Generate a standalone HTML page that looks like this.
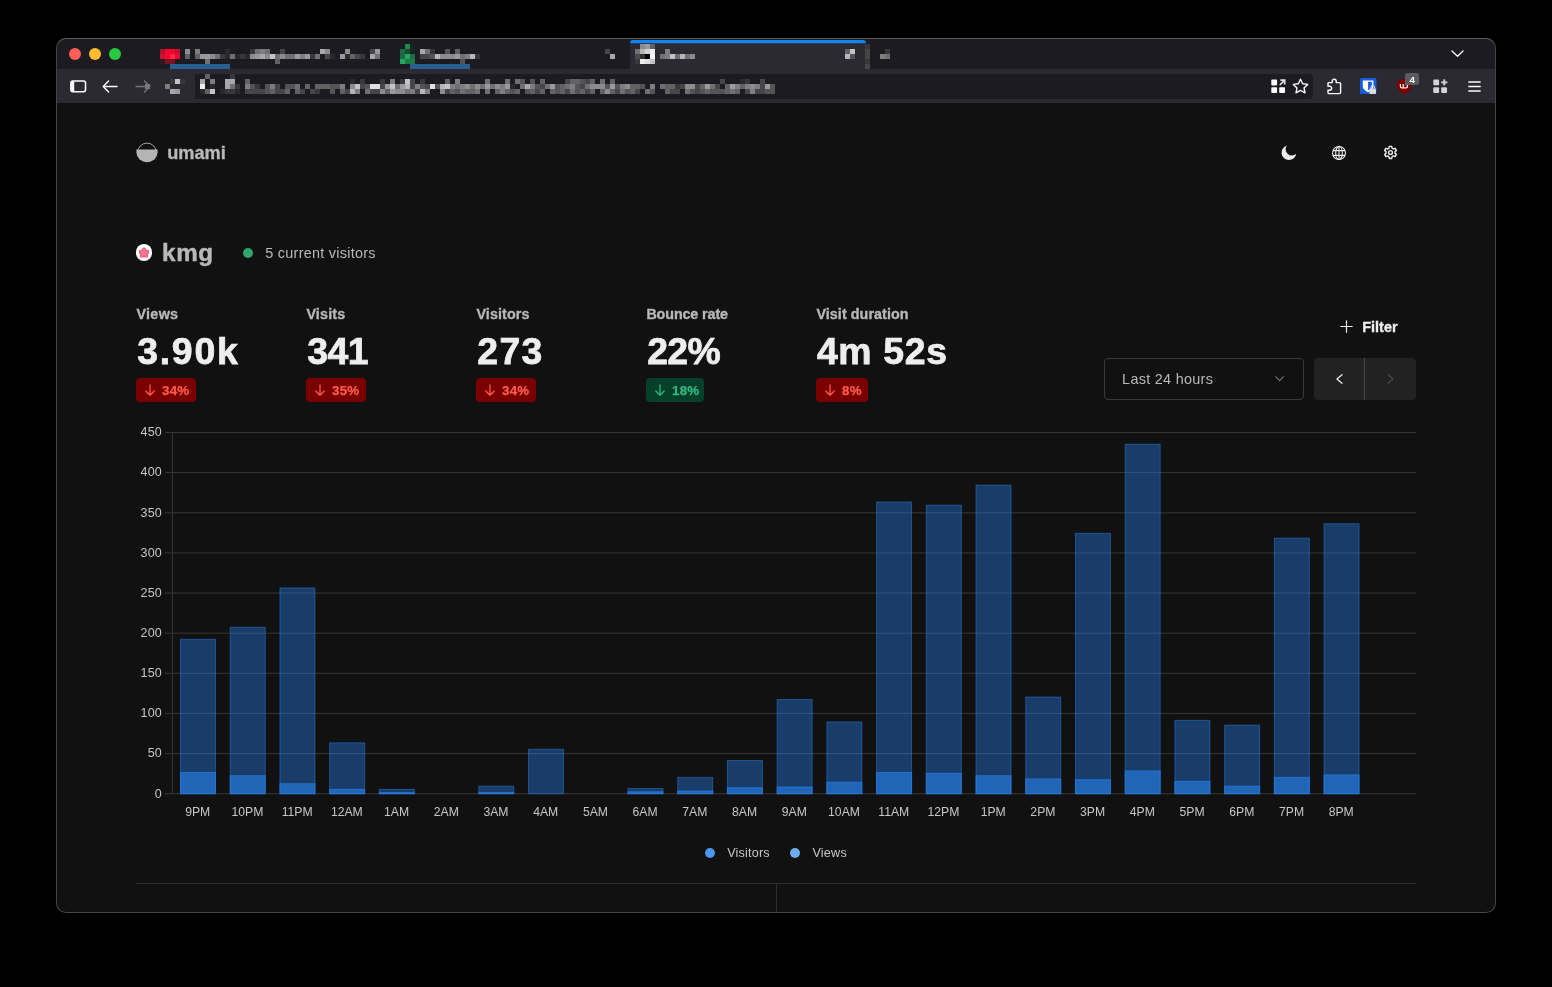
<!DOCTYPE html>
<html lang="en"><head><meta charset="utf-8"><title>umami</title>
<style>
html,body{margin:0;padding:0;background:#000;}
body{width:1552px;height:987px;position:relative;overflow:hidden;font-family:"Liberation Sans",sans-serif;}
.abs{position:absolute;}
.t{position:absolute;white-space:nowrap;line-height:1;font-family:"Liberation Sans",sans-serif;}
#win{position:absolute;left:56px;top:38px;width:1440px;height:875px;border-radius:10px;overflow:hidden;background:#111111;}
#winborder{position:absolute;left:56px;top:38px;width:1440px;height:875px;border-radius:10px;box-sizing:border-box;border:1px solid #454545;border-top-color:#5b5b5b;pointer-events:none;}
#tabbar{position:absolute;left:0;top:0;width:1440px;height:31px;background:#1c1b22;}
#toolbar{position:absolute;left:0;top:31px;width:1440px;height:34px;background:#2b2a33;}
svg{position:absolute;overflow:visible;}
.badge{position:absolute;height:24px;border-radius:4px;}
.s2{-webkit-text-stroke:0.25px currentColor;}
.s3{-webkit-text-stroke:0.35px currentColor;}
.s5{-webkit-text-stroke:0.5px currentColor;}
.s7{-webkit-text-stroke:0.75px currentColor;}
</style></head><body>
<div id="win">
<div id="tabbar"></div><div id="toolbar"></div>
</div>
<div id="page" class="abs" style="left:0;top:0;width:1552px;height:987px;will-change:transform;">
<div class="abs" style="left:69px;top:48px;width:12px;height:12px;border-radius:50%;background:#ff5f57;"></div>
<div class="abs" style="left:89px;top:48px;width:12px;height:12px;border-radius:50%;background:#febc2e;"></div>
<div class="abs" style="left:109px;top:48px;width:12px;height:12px;border-radius:50%;background:#28c840;"></div>
<div class="abs" style="left:630px;top:40px;width:236px;height:29px;background:#2b2a33;border-radius:4px 4px 0 0;"></div>
<div class="abs" style="left:630px;top:39.5px;width:236px;height:3.6px;background:#1484ee;border-radius:4px 4px 0 0;"></div>
<div class="abs" style="left:631px;top:43px;width:234px;height:1.2px;background:#1f3d6b;"></div>
<div class="abs" style="left:195px;top:73.6px;width:1117.5px;height:25.4px;background:#1c1b22;border-radius:0 4px 4px 0;"></div>
<svg width="1552" height="987" viewBox="0 0 1552 987" style="left:0;top:0;" shape-rendering="crispEdges">
<rect x="160" y="49" width="5" height="5" fill="#b0122a"/>
<rect x="165" y="49" width="5" height="5" fill="#ff0033"/>
<rect x="170" y="49" width="5" height="5" fill="#ff0033"/>
<rect x="175" y="49" width="5" height="5" fill="#c8102e"/>
<rect x="160" y="54" width="5" height="5" fill="#d01030"/>
<rect x="165" y="54" width="5" height="5" fill="#ff0033"/>
<rect x="170" y="54" width="5" height="5" fill="#ff2a4a"/>
<rect x="175" y="54" width="5" height="5" fill="#f00530"/>
<rect x="160" y="59" width="5" height="5" fill="#2a1a22"/>
<rect x="165" y="59" width="5" height="5" fill="#7a1020"/>
<rect x="170" y="59" width="5" height="5" fill="#7a1020"/>
<rect x="185" y="49" width="5" height="5" fill="#8c8c8f"/>
<rect x="195" y="49" width="5" height="5" fill="#7e7e81"/>
<rect x="225" y="49" width="5" height="5" fill="#2a2a2d"/>
<rect x="250" y="49" width="5" height="5" fill="#38383b"/>
<rect x="255" y="49" width="5" height="5" fill="#707073"/>
<rect x="260" y="49" width="5" height="5" fill="#7e7e81"/>
<rect x="265" y="49" width="5" height="5" fill="#707073"/>
<rect x="280" y="49" width="5" height="5" fill="#464649"/>
<rect x="320" y="49" width="5" height="5" fill="#a8a8ab"/>
<rect x="325" y="49" width="5" height="5" fill="#8c8c8f"/>
<rect x="185" y="54" width="5" height="5" fill="#626265"/>
<rect x="195" y="54" width="5" height="5" fill="#626265"/>
<rect x="200" y="54" width="5" height="5" fill="#9a9a9d"/>
<rect x="205" y="54" width="5" height="5" fill="#9a9a9d"/>
<rect x="210" y="54" width="5" height="5" fill="#8c8c8f"/>
<rect x="215" y="54" width="5" height="5" fill="#707073"/>
<rect x="220" y="54" width="5" height="5" fill="#38383b"/>
<rect x="225" y="54" width="5" height="5" fill="#2a2a2d"/>
<rect x="230" y="54" width="5" height="5" fill="#707073"/>
<rect x="235" y="54" width="5" height="5" fill="#2a2a2d"/>
<rect x="240" y="54" width="5" height="5" fill="#38383b"/>
<rect x="245" y="54" width="5" height="5" fill="#2a2a2d"/>
<rect x="250" y="54" width="5" height="5" fill="#8c8c8f"/>
<rect x="255" y="54" width="5" height="5" fill="#9a9a9d"/>
<rect x="260" y="54" width="5" height="5" fill="#a8a8ab"/>
<rect x="265" y="54" width="5" height="5" fill="#8c8c8f"/>
<rect x="270" y="54" width="5" height="5" fill="#c4c4c7"/>
<rect x="275" y="54" width="5" height="5" fill="#707073"/>
<rect x="280" y="54" width="5" height="5" fill="#8c8c8f"/>
<rect x="285" y="54" width="5" height="5" fill="#707073"/>
<rect x="290" y="54" width="5" height="5" fill="#707073"/>
<rect x="295" y="54" width="5" height="5" fill="#9a9a9d"/>
<rect x="300" y="54" width="5" height="5" fill="#7e7e81"/>
<rect x="305" y="54" width="5" height="5" fill="#9a9a9d"/>
<rect x="310" y="54" width="5" height="5" fill="#38383b"/>
<rect x="315" y="54" width="5" height="5" fill="#707073"/>
<rect x="325" y="54" width="5" height="5" fill="#464649"/>
<rect x="330" y="54" width="5" height="5" fill="#2a2a2d"/>
<rect x="340" y="54" width="5" height="5" fill="#9a9a9d"/>
<rect x="345" y="54" width="5" height="5" fill="#626265"/>
<rect x="205" y="59" width="5" height="5" fill="#707073"/>
<rect x="275" y="59" width="5" height="5" fill="#626265"/>
<rect x="170" y="64" width="60" height="5" fill="#27608f"/>
<rect x="345" y="49" width="5" height="5" fill="#8c8c8f"/>
<rect x="370" y="49" width="5" height="5" fill="#464649"/>
<rect x="375" y="49" width="5" height="5" fill="#9a9a9d"/>
<rect x="345" y="54" width="5" height="5" fill="#2a2a2d"/>
<rect x="350" y="54" width="5" height="5" fill="#626265"/>
<rect x="355" y="54" width="5" height="5" fill="#464649"/>
<rect x="360" y="54" width="5" height="5" fill="#38383b"/>
<rect x="370" y="54" width="5" height="5" fill="#a8a8ab"/>
<rect x="375" y="54" width="5" height="5" fill="#707073"/>
<rect x="405" y="44" width="5" height="5" fill="#1f8a4c"/>
<rect x="410" y="44" width="5" height="5" fill="#1a2428"/>
<rect x="400" y="49" width="5" height="5" fill="#1d6b40"/>
<rect x="405" y="49" width="5" height="5" fill="#1a4a30"/>
<rect x="410" y="49" width="5" height="5" fill="#1a2226"/>
<rect x="400" y="54" width="5" height="5" fill="#1d6b40"/>
<rect x="405" y="54" width="5" height="5" fill="#22a860"/>
<rect x="410" y="54" width="5" height="5" fill="#1d6b40"/>
<rect x="400" y="59" width="5" height="5" fill="#22a860"/>
<rect x="405" y="59" width="5" height="5" fill="#1f7a46"/>
<rect x="410" y="59" width="5" height="5" fill="#1f7a46"/>
<rect x="420" y="49" width="5" height="5" fill="#a8a8ab"/>
<rect x="425" y="49" width="5" height="5" fill="#707073"/>
<rect x="430" y="49" width="5" height="5" fill="#38383b"/>
<rect x="445" y="49" width="5" height="5" fill="#545457"/>
<rect x="455" y="49" width="5" height="5" fill="#626265"/>
<rect x="420" y="54" width="5" height="5" fill="#464649"/>
<rect x="425" y="54" width="5" height="5" fill="#464649"/>
<rect x="430" y="54" width="5" height="5" fill="#545457"/>
<rect x="435" y="54" width="5" height="5" fill="#b6b6b9"/>
<rect x="440" y="54" width="5" height="5" fill="#8c8c8f"/>
<rect x="445" y="54" width="5" height="5" fill="#8c8c8f"/>
<rect x="450" y="54" width="5" height="5" fill="#8c8c8f"/>
<rect x="455" y="54" width="5" height="5" fill="#9a9a9d"/>
<rect x="460" y="54" width="5" height="5" fill="#707073"/>
<rect x="465" y="54" width="5" height="5" fill="#7e7e81"/>
<rect x="470" y="54" width="5" height="5" fill="#b6b6b9"/>
<rect x="475" y="54" width="5" height="5" fill="#38383b"/>
<rect x="460" y="59" width="5" height="5" fill="#545457"/>
<rect x="410" y="64" width="60" height="5" fill="#27608f"/>
<rect x="605" y="49" width="5" height="5" fill="#464649"/>
<rect x="610" y="54" width="5" height="5" fill="#a8a8ab"/>
<rect x="640" y="44" width="5" height="5" fill="#8c8c8f"/>
<rect x="645" y="44" width="5" height="5" fill="#9a9a9d"/>
<rect x="650" y="44" width="5" height="5" fill="#626265"/>
<rect x="635" y="49" width="5" height="5" fill="#707073"/>
<rect x="640" y="49" width="5" height="5" fill="#b6b6b9"/>
<rect x="645" y="49" width="5" height="5" fill="#d2d2d5"/>
<rect x="650" y="49" width="5" height="5" fill="#eeeef1"/>
<rect x="635" y="54" width="5" height="5" fill="#4a4950"/>
<rect x="640" y="54" width="5" height="5" fill="#303030"/>
<rect x="645" y="54" width="5" height="5" fill="#000000"/>
<rect x="650" y="54" width="5" height="5" fill="#f8f8f8"/>
<rect x="635" y="59" width="5" height="5" fill="#38383b"/>
<rect x="640" y="59" width="5" height="5" fill="#eeeef1"/>
<rect x="645" y="59" width="5" height="5" fill="#e0e0e3"/>
<rect x="650" y="59" width="5" height="5" fill="#c4c4c7"/>
<rect x="665" y="49" width="5" height="5" fill="#7e7e81"/>
<rect x="660" y="54" width="5" height="5" fill="#707073"/>
<rect x="665" y="54" width="5" height="5" fill="#7e7e81"/>
<rect x="670" y="54" width="5" height="5" fill="#c4c4c7"/>
<rect x="675" y="54" width="5" height="5" fill="#707073"/>
<rect x="680" y="54" width="5" height="5" fill="#b6b6b9"/>
<rect x="685" y="54" width="5" height="5" fill="#707073"/>
<rect x="690" y="54" width="5" height="5" fill="#8c8c8f"/>
<rect x="845" y="49" width="5" height="5" fill="#626265"/>
<rect x="850" y="49" width="5" height="5" fill="#c4c4c7"/>
<rect x="845" y="54" width="5" height="5" fill="#b6b6b9"/>
<rect x="850" y="54" width="5" height="5" fill="#545457"/>
<rect x="865" y="44" width="5" height="5" fill="#38383b"/>
<rect x="865" y="49" width="5" height="5" fill="#464649"/>
<rect x="865" y="54" width="5" height="5" fill="#464649"/>
<rect x="865" y="59" width="5" height="5" fill="#38383b"/>
<rect x="865" y="64" width="5" height="5" fill="#464649"/>
<rect x="885" y="49" width="5" height="5" fill="#38383b"/>
<rect x="880" y="54" width="5" height="5" fill="#7e7e81"/>
<rect x="885" y="54" width="5" height="5" fill="#707073"/>
<rect x="165" y="79" width="5" height="5" fill="#2a2a2d"/>
<rect x="170" y="79" width="5" height="5" fill="#38383b"/>
<rect x="175" y="79" width="5" height="5" fill="#c4c4c7"/>
<rect x="180" y="79" width="5" height="5" fill="#38383b"/>
<rect x="165" y="84" width="5" height="5" fill="#7e7e81"/>
<rect x="170" y="89" width="5" height="5" fill="#a8a8ab"/>
<rect x="175" y="89" width="5" height="5" fill="#9a9a9d"/>
<rect x="205" y="74" width="5" height="5" fill="#626265"/>
<rect x="230" y="74" width="5" height="5" fill="#38383b"/>
<rect x="200" y="79" width="5" height="5" fill="#a8a8ab"/>
<rect x="210" y="79" width="5" height="5" fill="#7e7e81"/>
<rect x="225" y="79" width="5" height="5" fill="#a8a8ab"/>
<rect x="230" y="79" width="5" height="5" fill="#a8a8ab"/>
<rect x="200" y="84" width="5" height="5" fill="#eeeef1"/>
<rect x="210" y="84" width="5" height="5" fill="#2a2a2d"/>
<rect x="225" y="84" width="5" height="5" fill="#a8a8ab"/>
<rect x="230" y="84" width="5" height="5" fill="#707073"/>
<rect x="235" y="84" width="5" height="5" fill="#38383b"/>
<rect x="200" y="89" width="5" height="5" fill="#2a2a2d"/>
<rect x="205" y="89" width="5" height="5" fill="#626265"/>
<rect x="210" y="89" width="5" height="5" fill="#c4c4c7"/>
<rect x="220" y="89" width="5" height="5" fill="#2a2a2d"/>
<rect x="225" y="89" width="5" height="5" fill="#38383b"/>
<rect x="230" y="89" width="5" height="5" fill="#38383b"/>
<rect x="235" y="89" width="5" height="5" fill="#2a2a2d"/>
<rect x="245" y="79" width="5" height="5" fill="#626265"/>
<rect x="245" y="84" width="5" height="5" fill="#7e7e81"/>
<rect x="250" y="84" width="5" height="5" fill="#545457"/>
<rect x="255" y="84" width="5" height="5" fill="#38383b"/>
<rect x="265" y="84" width="5" height="5" fill="#545457"/>
<rect x="270" y="84" width="5" height="5" fill="#7e7e81"/>
<rect x="275" y="84" width="5" height="5" fill="#464649"/>
<rect x="285" y="84" width="5" height="5" fill="#545457"/>
<rect x="290" y="84" width="5" height="5" fill="#545457"/>
<rect x="295" y="84" width="5" height="5" fill="#707073"/>
<rect x="305" y="84" width="5" height="5" fill="#626265"/>
<rect x="315" y="84" width="5" height="5" fill="#626265"/>
<rect x="320" y="84" width="5" height="5" fill="#626265"/>
<rect x="325" y="84" width="5" height="5" fill="#626265"/>
<rect x="330" y="84" width="5" height="5" fill="#545457"/>
<rect x="335" y="84" width="5" height="5" fill="#545457"/>
<rect x="340" y="84" width="5" height="5" fill="#626265"/>
<rect x="245" y="89" width="5" height="5" fill="#464649"/>
<rect x="250" y="89" width="5" height="5" fill="#464649"/>
<rect x="255" y="89" width="5" height="5" fill="#464649"/>
<rect x="260" y="89" width="5" height="5" fill="#464649"/>
<rect x="265" y="89" width="5" height="5" fill="#545457"/>
<rect x="270" y="89" width="5" height="5" fill="#626265"/>
<rect x="275" y="89" width="5" height="5" fill="#464649"/>
<rect x="280" y="89" width="5" height="5" fill="#464649"/>
<rect x="285" y="89" width="5" height="5" fill="#626265"/>
<rect x="295" y="89" width="5" height="5" fill="#626265"/>
<rect x="300" y="89" width="5" height="5" fill="#464649"/>
<rect x="310" y="89" width="5" height="5" fill="#464649"/>
<rect x="315" y="89" width="5" height="5" fill="#38383b"/>
<rect x="330" y="89" width="5" height="5" fill="#545457"/>
<rect x="340" y="89" width="5" height="5" fill="#464649"/>
<rect x="345" y="89" width="5" height="5" fill="#464649"/>
<rect x="350" y="79" width="5" height="5" fill="#2a2a2d"/>
<rect x="360" y="79" width="5" height="5" fill="#38383b"/>
<rect x="380" y="79" width="5" height="5" fill="#38383b"/>
<rect x="390" y="79" width="5" height="5" fill="#7e7e81"/>
<rect x="400" y="79" width="5" height="5" fill="#38383b"/>
<rect x="405" y="79" width="5" height="5" fill="#c4c4c7"/>
<rect x="410" y="79" width="5" height="5" fill="#464649"/>
<rect x="420" y="79" width="5" height="5" fill="#38383b"/>
<rect x="445" y="79" width="5" height="5" fill="#626265"/>
<rect x="455" y="79" width="5" height="5" fill="#7e7e81"/>
<rect x="485" y="79" width="5" height="5" fill="#707073"/>
<rect x="505" y="79" width="5" height="5" fill="#707073"/>
<rect x="515" y="79" width="5" height="5" fill="#707073"/>
<rect x="520" y="79" width="5" height="5" fill="#545457"/>
<rect x="530" y="79" width="5" height="5" fill="#626265"/>
<rect x="340" y="84" width="5" height="5" fill="#7e7e81"/>
<rect x="350" y="84" width="5" height="5" fill="#8c8c8f"/>
<rect x="355" y="84" width="5" height="5" fill="#c4c4c7"/>
<rect x="360" y="84" width="5" height="5" fill="#464649"/>
<rect x="365" y="84" width="5" height="5" fill="#545457"/>
<rect x="370" y="84" width="5" height="5" fill="#e0e0e3"/>
<rect x="375" y="84" width="5" height="5" fill="#e0e0e3"/>
<rect x="380" y="84" width="5" height="5" fill="#464649"/>
<rect x="385" y="84" width="5" height="5" fill="#9a9a9d"/>
<rect x="390" y="84" width="5" height="5" fill="#c4c4c7"/>
<rect x="395" y="84" width="5" height="5" fill="#707073"/>
<rect x="400" y="84" width="5" height="5" fill="#9a9a9d"/>
<rect x="405" y="84" width="5" height="5" fill="#b6b6b9"/>
<rect x="410" y="84" width="5" height="5" fill="#464649"/>
<rect x="415" y="84" width="5" height="5" fill="#7e7e81"/>
<rect x="420" y="84" width="5" height="5" fill="#545457"/>
<rect x="425" y="84" width="5" height="5" fill="#464649"/>
<rect x="430" y="84" width="5" height="5" fill="#e0e0e3"/>
<rect x="435" y="84" width="5" height="5" fill="#545457"/>
<rect x="440" y="84" width="5" height="5" fill="#b6b6b9"/>
<rect x="445" y="84" width="5" height="5" fill="#c4c4c7"/>
<rect x="450" y="84" width="5" height="5" fill="#7e7e81"/>
<rect x="455" y="84" width="5" height="5" fill="#707073"/>
<rect x="460" y="84" width="5" height="5" fill="#7e7e81"/>
<rect x="465" y="84" width="5" height="5" fill="#8c8c8f"/>
<rect x="470" y="84" width="5" height="5" fill="#707073"/>
<rect x="475" y="84" width="5" height="5" fill="#8c8c8f"/>
<rect x="480" y="84" width="5" height="5" fill="#707073"/>
<rect x="485" y="84" width="5" height="5" fill="#9a9a9d"/>
<rect x="490" y="84" width="5" height="5" fill="#707073"/>
<rect x="495" y="84" width="5" height="5" fill="#8c8c8f"/>
<rect x="500" y="84" width="5" height="5" fill="#7e7e81"/>
<rect x="505" y="84" width="5" height="5" fill="#9a9a9d"/>
<rect x="510" y="84" width="5" height="5" fill="#2a2a2d"/>
<rect x="520" y="84" width="5" height="5" fill="#707073"/>
<rect x="525" y="84" width="5" height="5" fill="#a8a8ab"/>
<rect x="530" y="84" width="5" height="5" fill="#626265"/>
<rect x="535" y="84" width="5" height="5" fill="#8c8c8f"/>
<rect x="340" y="89" width="5" height="5" fill="#626265"/>
<rect x="350" y="89" width="5" height="5" fill="#b6b6b9"/>
<rect x="355" y="89" width="5" height="5" fill="#7e7e81"/>
<rect x="365" y="89" width="5" height="5" fill="#707073"/>
<rect x="370" y="89" width="5" height="5" fill="#464649"/>
<rect x="375" y="89" width="5" height="5" fill="#464649"/>
<rect x="380" y="89" width="5" height="5" fill="#8c8c8f"/>
<rect x="385" y="89" width="5" height="5" fill="#626265"/>
<rect x="390" y="89" width="5" height="5" fill="#9a9a9d"/>
<rect x="395" y="89" width="5" height="5" fill="#8c8c8f"/>
<rect x="400" y="89" width="5" height="5" fill="#8c8c8f"/>
<rect x="405" y="89" width="5" height="5" fill="#707073"/>
<rect x="410" y="89" width="5" height="5" fill="#7e7e81"/>
<rect x="415" y="89" width="5" height="5" fill="#464649"/>
<rect x="420" y="89" width="5" height="5" fill="#b6b6b9"/>
<rect x="425" y="89" width="5" height="5" fill="#7e7e81"/>
<rect x="440" y="89" width="5" height="5" fill="#8c8c8f"/>
<rect x="445" y="89" width="5" height="5" fill="#464649"/>
<rect x="450" y="89" width="5" height="5" fill="#626265"/>
<rect x="455" y="89" width="5" height="5" fill="#545457"/>
<rect x="460" y="89" width="5" height="5" fill="#707073"/>
<rect x="465" y="89" width="5" height="5" fill="#626265"/>
<rect x="470" y="89" width="5" height="5" fill="#626265"/>
<rect x="475" y="89" width="5" height="5" fill="#707073"/>
<rect x="485" y="89" width="5" height="5" fill="#707073"/>
<rect x="495" y="89" width="5" height="5" fill="#626265"/>
<rect x="500" y="89" width="5" height="5" fill="#7e7e81"/>
<rect x="505" y="89" width="5" height="5" fill="#626265"/>
<rect x="510" y="89" width="5" height="5" fill="#545457"/>
<rect x="515" y="89" width="5" height="5" fill="#626265"/>
<rect x="525" y="89" width="5" height="5" fill="#545457"/>
<rect x="530" y="89" width="5" height="5" fill="#707073"/>
<rect x="535" y="89" width="5" height="5" fill="#545457"/>
<rect x="540" y="89" width="5" height="5" fill="#626265"/>
<rect x="530" y="79" width="5" height="5" fill="#545457"/>
<rect x="540" y="79" width="5" height="5" fill="#626265"/>
<rect x="565" y="79" width="5" height="5" fill="#464649"/>
<rect x="570" y="79" width="5" height="5" fill="#626265"/>
<rect x="575" y="79" width="5" height="5" fill="#626265"/>
<rect x="580" y="79" width="5" height="5" fill="#545457"/>
<rect x="585" y="79" width="5" height="5" fill="#464649"/>
<rect x="590" y="79" width="5" height="5" fill="#626265"/>
<rect x="600" y="79" width="5" height="5" fill="#707073"/>
<rect x="610" y="79" width="5" height="5" fill="#626265"/>
<rect x="720" y="79" width="5" height="5" fill="#464649"/>
<rect x="530" y="84" width="5" height="5" fill="#7e7e81"/>
<rect x="535" y="84" width="5" height="5" fill="#545457"/>
<rect x="540" y="84" width="5" height="5" fill="#464649"/>
<rect x="545" y="84" width="5" height="5" fill="#707073"/>
<rect x="550" y="84" width="5" height="5" fill="#9a9a9d"/>
<rect x="555" y="84" width="5" height="5" fill="#545457"/>
<rect x="560" y="84" width="5" height="5" fill="#626265"/>
<rect x="565" y="84" width="5" height="5" fill="#707073"/>
<rect x="570" y="84" width="5" height="5" fill="#7e7e81"/>
<rect x="575" y="84" width="5" height="5" fill="#545457"/>
<rect x="580" y="84" width="5" height="5" fill="#464649"/>
<rect x="585" y="84" width="5" height="5" fill="#707073"/>
<rect x="590" y="84" width="5" height="5" fill="#8c8c8f"/>
<rect x="595" y="84" width="5" height="5" fill="#8c8c8f"/>
<rect x="600" y="84" width="5" height="5" fill="#8c8c8f"/>
<rect x="605" y="84" width="5" height="5" fill="#545457"/>
<rect x="610" y="84" width="5" height="5" fill="#9a9a9d"/>
<rect x="615" y="84" width="5" height="5" fill="#545457"/>
<rect x="620" y="84" width="5" height="5" fill="#7e7e81"/>
<rect x="625" y="84" width="5" height="5" fill="#8c8c8f"/>
<rect x="630" y="84" width="5" height="5" fill="#626265"/>
<rect x="635" y="84" width="5" height="5" fill="#626265"/>
<rect x="640" y="84" width="5" height="5" fill="#545457"/>
<rect x="650" y="84" width="5" height="5" fill="#7e7e81"/>
<rect x="660" y="84" width="5" height="5" fill="#707073"/>
<rect x="665" y="84" width="5" height="5" fill="#626265"/>
<rect x="670" y="84" width="5" height="5" fill="#626265"/>
<rect x="675" y="84" width="5" height="5" fill="#38383b"/>
<rect x="680" y="84" width="5" height="5" fill="#464649"/>
<rect x="685" y="84" width="5" height="5" fill="#8c8c8f"/>
<rect x="690" y="84" width="5" height="5" fill="#8c8c8f"/>
<rect x="695" y="84" width="5" height="5" fill="#464649"/>
<rect x="700" y="84" width="5" height="5" fill="#626265"/>
<rect x="705" y="84" width="5" height="5" fill="#9a9a9d"/>
<rect x="710" y="84" width="5" height="5" fill="#707073"/>
<rect x="715" y="84" width="5" height="5" fill="#464649"/>
<rect x="725" y="84" width="5" height="5" fill="#7e7e81"/>
<rect x="530" y="89" width="5" height="5" fill="#626265"/>
<rect x="535" y="89" width="5" height="5" fill="#464649"/>
<rect x="540" y="89" width="5" height="5" fill="#626265"/>
<rect x="550" y="89" width="5" height="5" fill="#626265"/>
<rect x="555" y="89" width="5" height="5" fill="#545457"/>
<rect x="560" y="89" width="5" height="5" fill="#626265"/>
<rect x="565" y="89" width="5" height="5" fill="#464649"/>
<rect x="570" y="89" width="5" height="5" fill="#707073"/>
<rect x="575" y="89" width="5" height="5" fill="#545457"/>
<rect x="580" y="89" width="5" height="5" fill="#626265"/>
<rect x="585" y="89" width="5" height="5" fill="#464649"/>
<rect x="590" y="89" width="5" height="5" fill="#626265"/>
<rect x="600" y="89" width="5" height="5" fill="#626265"/>
<rect x="605" y="89" width="5" height="5" fill="#8c8c8f"/>
<rect x="610" y="89" width="5" height="5" fill="#626265"/>
<rect x="615" y="89" width="5" height="5" fill="#464649"/>
<rect x="620" y="89" width="5" height="5" fill="#707073"/>
<rect x="625" y="89" width="5" height="5" fill="#545457"/>
<rect x="630" y="89" width="5" height="5" fill="#626265"/>
<rect x="635" y="89" width="5" height="5" fill="#464649"/>
<rect x="645" y="89" width="5" height="5" fill="#707073"/>
<rect x="650" y="89" width="5" height="5" fill="#545457"/>
<rect x="665" y="89" width="5" height="5" fill="#626265"/>
<rect x="670" y="89" width="5" height="5" fill="#464649"/>
<rect x="675" y="89" width="5" height="5" fill="#464649"/>
<rect x="685" y="89" width="5" height="5" fill="#707073"/>
<rect x="690" y="89" width="5" height="5" fill="#545457"/>
<rect x="695" y="89" width="5" height="5" fill="#464649"/>
<rect x="700" y="89" width="5" height="5" fill="#545457"/>
<rect x="705" y="89" width="5" height="5" fill="#626265"/>
<rect x="710" y="89" width="5" height="5" fill="#545457"/>
<rect x="715" y="89" width="5" height="5" fill="#545457"/>
<rect x="720" y="89" width="5" height="5" fill="#545457"/>
<rect x="720" y="79" width="5" height="5" fill="#464649"/>
<rect x="740" y="79" width="5" height="5" fill="#2a2a2d"/>
<rect x="745" y="79" width="5" height="5" fill="#38383b"/>
<rect x="760" y="79" width="5" height="5" fill="#464649"/>
<rect x="725" y="84" width="5" height="5" fill="#626265"/>
<rect x="730" y="84" width="5" height="5" fill="#9a9a9d"/>
<rect x="735" y="84" width="5" height="5" fill="#7e7e81"/>
<rect x="740" y="84" width="5" height="5" fill="#626265"/>
<rect x="745" y="84" width="5" height="5" fill="#7e7e81"/>
<rect x="750" y="84" width="5" height="5" fill="#8c8c8f"/>
<rect x="755" y="84" width="5" height="5" fill="#7e7e81"/>
<rect x="760" y="84" width="5" height="5" fill="#464649"/>
<rect x="765" y="84" width="5" height="5" fill="#9a9a9d"/>
<rect x="770" y="84" width="5" height="5" fill="#545457"/>
<rect x="725" y="89" width="5" height="5" fill="#626265"/>
<rect x="730" y="89" width="5" height="5" fill="#707073"/>
<rect x="735" y="89" width="5" height="5" fill="#626265"/>
<rect x="745" y="89" width="5" height="5" fill="#464649"/>
<rect x="750" y="89" width="5" height="5" fill="#7e7e81"/>
<rect x="755" y="89" width="5" height="5" fill="#464649"/>
<rect x="760" y="89" width="5" height="5" fill="#464649"/>
<rect x="765" y="89" width="5" height="5" fill="#545457"/>
<rect x="770" y="89" width="5" height="5" fill="#545457"/>
</svg>
<svg width="16.4" height="12.6" viewBox="0 0 17 13" style="left:69.9px;top:79.7px;"><rect x="0.9" y="0.9" width="15.2" height="11.2" rx="2" fill="none" stroke="#fbfbfe" stroke-width="1.6"/><path d="M1 2.5 Q1 1 2.6 1 H4.4 V12 H2.6 Q1 12 1 10.5 Z" fill="#fbfbfe"/></svg>
<svg width="16" height="13" viewBox="0 0 16 13" style="left:102.4px;top:80px;" fill="none" stroke="#fbfbfe" stroke-width="1.35" stroke-linecap="round" stroke-linejoin="round"><path d="M15 6.5H1.4M6.6 1L1.2 6.5L6.6 12"/></svg>
<svg width="16" height="13" viewBox="0 0 16 13" style="left:134.6px;top:80px;" fill="none" stroke="#75747c" stroke-width="1.4" stroke-linecap="round" stroke-linejoin="round"><path d="M1 6.5H12M9.4 1L14.8 6.5L9.4 12"/></svg>
<div class="abs" style="left:145px;top:84px;width:5px;height:5px;background:#77767d;"></div>
<svg width="15" height="15" viewBox="0 0 15 15" style="left:1270.5px;top:78.8px;"><g fill="#fbfbfe"><rect x="0.3" y="0.6" width="5.8" height="5.8" rx="0.8"/><rect x="0.3" y="8.3" width="5.8" height="5.8" rx="0.8"/><rect x="8.2" y="8.3" width="5.8" height="5.8" rx="0.8"/></g><path d="M8.8 6L13 1.8M9.4 1.1H13.7V5.4" fill="none" stroke="#dcdce2" stroke-width="1.7"/></svg>
<svg width="17" height="16" viewBox="0 0 17 16" style="left:1291.6px;top:78.4px;" fill="none" stroke="#fbfbfe" stroke-width="1.4" stroke-linejoin="round"><path d="M8.5 1.2L10.7 5.8L15.7 6.4L12 9.9L13 14.8L8.5 12.4L4 14.8L5 9.9L1.3 6.4L6.3 5.8Z"/></svg>
<svg width="15" height="17" viewBox="0 0 15 17" style="left:1327px;top:77.6px;" fill="none" stroke="#fbfbfe" stroke-width="1.4" stroke-linejoin="round"><path d="M5.2 4.6V3.2A2 2 0 0 1 9.2 3.2V4.6H12.6Q13.6 4.6 13.6 5.6V14.6Q13.6 15.6 12.6 15.6H2Q1 15.6 1 14.6V12.2H2.6A2 2 0 0 0 2.6 8.2H1V5.6Q1 4.6 2 4.6Z"/></svg>
<svg width="17" height="17" viewBox="0 0 17 17" style="left:1359.8px;top:77.8px;"><rect x="0" y="0" width="16.4" height="16" rx="1.5" fill="#175ddc"/><path d="M2.8 2.4H13.4V8.2Q13.4 11.8 8.1 14.2Q2.8 11.8 2.8 8.2Z" fill="#ffffff"/><path d="M8.1 3.8H11.9V8.2Q11.9 10.6 8.1 12.5Z" fill="#175ddc"/><rect x="9.4" y="10.6" width="6.6" height="5.4" rx="1" fill="#d9d9de"/><path d="M10.9 10.8V9.6A1.8 1.8 0 0 1 14.5 9.6V10.8" fill="none" stroke="#d9d9de" stroke-width="1.1"/></svg>
<svg width="15" height="17" viewBox="0 0 15 17" style="left:1396.6px;top:78.2px;"><path d="M7.3 0.4Q10.6 2.4 14.2 2.6V8.2Q14.2 13 7.3 16.2Q0.4 13 0.4 8.2V2.6Q4 2.4 7.3 0.4Z" fill="#800000"/><path d="M3.4 6V8.6Q3.4 10 4.8 10H6.2V6M6.2 8.6Q6.2 10 7.6 10H9Q10.4 10 10.4 8.6V7.4Q10.4 6 9 6H8" fill="none" stroke="#ffffff" stroke-width="1.2"/></svg>
<div class="abs" style="left:1405px;top:73.3px;width:14px;height:11.8px;border-radius:2.5px;background:#5b5b5f;"></div>
<div class="t " style="top:74.80px;font-size:9.8px;color:#ffffff;font-weight:700;left:1409.40px;">4</div>
<svg width="15" height="15" viewBox="0 0 15 15" style="left:1432.6px;top:78.8px;"><g fill="#d4d4d8"><rect x="0.3" y="0.5" width="5.8" height="5.8" rx="1"/><rect x="0.3" y="8.2" width="5.8" height="5.8" rx="1"/><rect x="8.2" y="8.2" width="5.8" height="5.8" rx="1"/><rect x="10.3" y="0.4" width="1.9" height="6"/><rect x="8.2" y="2.45" width="6.1" height="1.9"/></g></svg>
<svg width="13" height="11" viewBox="0 0 13 11" style="left:1467.6px;top:80.6px;" stroke="#fbfbfe" stroke-width="1.4" stroke-linecap="round"><path d="M0.8 1H12.2M0.8 5.5H12.2M0.8 10H12.2"/></svg>
<svg width="13" height="7.4" viewBox="0 0 14 8" style="left:1451.4px;top:50.4px;" fill="none" stroke="#fbfbfe" stroke-width="1.4" stroke-linecap="round" stroke-linejoin="round"><path d="M1 1L7 6.8L13 1"/></svg>
<svg width="22" height="21" viewBox="0 0 22 21" style="left:135.5px;top:142.3px;">
<circle cx="11" cy="10.4" r="9.3" fill="none" stroke="#b4b4b4" stroke-width="0.9"/>
<path d="M0.4 7.6 H21.6 V10.2 A10.6 10 0 0 1 0.4 10.2 Z" fill="#b4b4b4"/>
</svg>
<div class="t s3" style="top:143.59px;font-size:18.2px;color:#b8b8b8;font-weight:700;letter-spacing:-0.05px;left:167.30px;">umami</div>
<svg width="16" height="16" viewBox="0 0 16 16" style="left:1281px;top:145px;">
<path d="M5.9 0.6 A7.4 7.4 0 1 0 15.25 8.75 A6.22 6.22 0 0 1 5.9 0.6 Z" fill="#eeeeee"/>
</svg>
<svg width="16" height="16" viewBox="0 0 16 16" style="left:1331.4px;top:144.8px;" fill="none" stroke="#eeeeee" stroke-width="1.1">
<circle cx="8" cy="8" r="6.5"/>
<ellipse cx="8" cy="8" rx="3.3" ry="6.5"/>
<path d="M8 1.5V14.5M2 5.6H14M2 10.4H14"/>
</svg>
<svg width="17" height="17" viewBox="0 0 24 24" style="left:1381.8px;top:144.0px;" fill="none" stroke="#eeeeee" stroke-width="2" stroke-linejoin="round">
<path d="M10.3 2.2h3.4l.6 2.7 1.7.9 2.6-.9 1.7 2.9-2 1.9v2l2 1.9-1.7 2.9-2.6-.9-1.7.9-.6 2.7h-3.4l-.6-2.7-1.7-.9-2.6.9-1.7-2.9 2-1.9v-2l-2-1.9 1.7-2.9 2.6.9 1.7-.9z" transform="translate(0 1.2)"/>
<circle cx="12" cy="12" r="2.7"/>
</svg>
<div class="abs" style="left:136px;top:244.3px;width:16.4px;height:16.4px;border-radius:50%;background:#fdfdfd;"></div>
<svg width="12" height="12" viewBox="0 0 12 12" style="left:138.2px;top:246.5px;">
<g fill="#ee5f80"><circle cx="6" cy="2.9" r="2.3"/><circle cx="3" cy="5" r="2.3"/><circle cx="9" cy="5" r="2.3"/><circle cx="4.1" cy="8.5" r="2.3"/><circle cx="7.9" cy="8.5" r="2.3"/><circle cx="6" cy="6" r="3"/></g>
<g fill="none" stroke="#f7a3b6" stroke-width="0.7"><circle cx="6" cy="6" r="1.6"/><path d="M6 1.6V4.2M2 4.8L4.4 5.6M10 4.8L7.6 5.6M3.6 9.6L5 7.4M8.4 9.6L7 7.4"/></g>
</svg>
<div class="t s5" style="top:241.01px;font-size:24.2px;color:#b8b8b8;font-weight:700;letter-spacing:0.6px;left:162.10px;">kmg</div>
<div class="abs" style="left:243px;top:247.5px;width:10px;height:10px;border-radius:50%;background:#30a46c;"></div>
<div class="t " style="top:245.81px;font-size:14.4px;color:#b8b8b8;font-weight:400;letter-spacing:0.27px;left:265.30px;">5 current visitors</div>
<div class="t lab0 s3" style="top:306.90px;font-size:14.3px;color:#b8b8b8;font-weight:700;letter-spacing:0.35px;left:136.40px;">Views</div>
<div class="t val0 s7" style="top:332.54px;font-size:37.4px;color:#eeeeee;font-weight:700;letter-spacing:1.75px;left:137.20px;">3.90k</div>
<div class="badge b0" style="left:136.2px;top:378px;width:60.2px;background:#7a0000;"><svg width="10" height="12" viewBox="0 0 10 12" style="left:8.7px;top:5.6px;" fill="none" stroke="#ff5b4d" stroke-width="1.25" stroke-linecap="round" stroke-linejoin="round"><path d="M5 0.8V11.2M0.8 7L5 11.2L9.2 7"/></svg><div class="t bt0 s2" style="left:25.8px;top:5.74px;font-size:13.3px;font-weight:700;letter-spacing:0.3px;color:#ff5b4d;">34%</div></div>
<div class="t lab1 s3" style="top:306.90px;font-size:14.3px;color:#b8b8b8;font-weight:700;letter-spacing:0.2px;left:306.40px;">Visits</div>
<div class="t val1 s7" style="top:332.54px;font-size:37.4px;color:#eeeeee;font-weight:700;letter-spacing:-0.5px;left:307.20px;">341</div>
<div class="badge b1" style="left:306.2px;top:378px;width:59.8px;background:#7a0000;"><svg width="10" height="12" viewBox="0 0 10 12" style="left:8.7px;top:5.6px;" fill="none" stroke="#ff5b4d" stroke-width="1.25" stroke-linecap="round" stroke-linejoin="round"><path d="M5 0.8V11.2M0.8 7L5 11.2L9.2 7"/></svg><div class="t bt1 s2" style="left:25.8px;top:5.74px;font-size:13.3px;font-weight:700;letter-spacing:0.3px;color:#ff5b4d;">35%</div></div>
<div class="t lab2 s3" style="top:306.90px;font-size:14.3px;color:#b8b8b8;font-weight:700;letter-spacing:0.12px;left:476.40px;">Visitors</div>
<div class="t val2 s7" style="top:332.54px;font-size:37.4px;color:#eeeeee;font-weight:700;letter-spacing:1.4px;left:477.20px;">273</div>
<div class="badge b2" style="left:476.2px;top:378px;width:60.2px;background:#7a0000;"><svg width="10" height="12" viewBox="0 0 10 12" style="left:8.7px;top:5.6px;" fill="none" stroke="#ff5b4d" stroke-width="1.25" stroke-linecap="round" stroke-linejoin="round"><path d="M5 0.8V11.2M0.8 7L5 11.2L9.2 7"/></svg><div class="t bt2 s2" style="left:25.8px;top:5.74px;font-size:13.3px;font-weight:700;letter-spacing:0.3px;color:#ff5b4d;">34%</div></div>
<div class="t lab3 s3" style="top:306.90px;font-size:14.3px;color:#b8b8b8;font-weight:700;letter-spacing:-0.1px;left:646.40px;">Bounce rate</div>
<div class="t val3 s7" style="top:332.54px;font-size:37.4px;color:#eeeeee;font-weight:700;letter-spacing:-0.7px;left:647.20px;">22%</div>
<div class="badge b3" style="left:646.2px;top:378px;width:57.8px;background:#06402b;"><svg width="10" height="12" viewBox="0 0 10 12" style="left:8.7px;top:5.6px;" fill="none" stroke="#2fb87f" stroke-width="1.25" stroke-linecap="round" stroke-linejoin="round"><path d="M5 0.8V11.2M0.8 7L5 11.2L9.2 7"/></svg><div class="t bt3 s2" style="left:25.8px;top:5.74px;font-size:13.3px;font-weight:700;letter-spacing:0.3px;color:#2fb87f;">18%</div></div>
<div class="t lab4 s3" style="top:306.90px;font-size:14.3px;color:#b8b8b8;font-weight:700;letter-spacing:0.08px;left:816.40px;">Visit duration</div>
<div class="t val4 s7" style="top:332.54px;font-size:37.4px;color:#eeeeee;font-weight:700;letter-spacing:0.65px;left:816.90px;">4m&nbsp;52s</div>
<div class="badge b4" style="left:816.2px;top:378px;width:51.6px;background:#7a0000;"><svg width="10" height="12" viewBox="0 0 10 12" style="left:8.7px;top:5.6px;" fill="none" stroke="#ff5b4d" stroke-width="1.25" stroke-linecap="round" stroke-linejoin="round"><path d="M5 0.8V11.2M0.8 7L5 11.2L9.2 7"/></svg><div class="t bt4 s2" style="left:25.8px;top:5.74px;font-size:13.3px;font-weight:700;letter-spacing:0.3px;color:#ff5b4d;">8%</div></div>
<svg width="13" height="13" viewBox="0 0 13 13" style="left:1339.8px;top:320.2px;" fill="none" stroke="#eeeeee" stroke-width="1.2" stroke-linecap="round"><path d="M6.5 0.8V12.2M0.8 6.5H12.2"/></svg>
<div class="t filter s3" style="top:320.01px;font-size:14.4px;color:#eeeeee;font-weight:700;left:1362.30px;">Filter</div>
<div class="abs" style="left:1104px;top:357.5px;width:200px;height:42px;box-sizing:border-box;border:1px solid #3a3a3a;border-radius:4px;"></div>
<div class="t last24" style="top:372.21px;font-size:14.4px;color:#b8b8b8;font-weight:400;letter-spacing:0.3px;left:1122.10px;">Last 24 hours</div>
<svg width="9.2" height="5.6" viewBox="0 0 10 6" style="left:1274.8px;top:376.1px;" fill="none" stroke="#7b7b7b" stroke-width="1.1" stroke-linecap="round" stroke-linejoin="round"><path d="M0.7 0.7L5 5L9.3 0.7"/></svg>
<div class="abs" style="left:1314px;top:357.5px;width:102px;height:42px;border-radius:4px;background:#222222;"></div>
<div class="abs" style="left:1364px;top:357.5px;width:1px;height:42px;background:#484848;"></div>
<svg width="7.3" height="10" viewBox="0 0 8 11" style="left:1335.7px;top:373.6px;" fill="none" stroke="#eeeeee" stroke-width="1.4" stroke-linecap="round" stroke-linejoin="round"><path d="M6.6 0.8L1 5.5L6.6 10.2"/></svg>
<svg width="7.3" height="10" viewBox="0 0 8 11" style="left:1387.1px;top:373.6px;" fill="none" stroke="#4c4c4c" stroke-width="1.3" stroke-linecap="round" stroke-linejoin="round"><path d="M1.2 0.8L6.6 5.5L1.2 10.2"/></svg>
<svg width="1552" height="987" style="left:0;top:0;" viewBox="0 0 1552 987">
<rect x="165" y="793.15" width="1251.00" height="1.1" fill="#343434"/>
<rect x="165" y="753.02" width="1251.00" height="1.1" fill="#343434"/>
<rect x="165" y="712.88" width="1251.00" height="1.1" fill="#343434"/>
<rect x="165" y="672.75" width="1251.00" height="1.1" fill="#343434"/>
<rect x="165" y="632.62" width="1251.00" height="1.1" fill="#343434"/>
<rect x="165" y="592.48" width="1251.00" height="1.1" fill="#343434"/>
<rect x="165" y="552.35" width="1251.00" height="1.1" fill="#343434"/>
<rect x="165" y="512.22" width="1251.00" height="1.1" fill="#343434"/>
<rect x="165" y="472.08" width="1251.00" height="1.1" fill="#343434"/>
<rect x="165" y="431.95" width="1251.00" height="1.1" fill="#343434"/>
<rect x="171.90" y="432.50" width="1.1" height="361.20" fill="#343434"/>
<rect x="180.50" y="639.29" width="35.00" height="154.41" fill="rgba(38,128,235,0.4)" stroke="rgba(38,128,235,0.5)" stroke-width="1" shape-rendering="geometricPrecision"/>
<rect x="180.50" y="772.53" width="35.00" height="21.17" fill="rgba(38,128,235,0.6)" stroke="rgba(38,128,235,0.7)" stroke-width="1" shape-rendering="geometricPrecision"/>
<rect x="230.22" y="627.25" width="35.00" height="166.45" fill="rgba(38,128,235,0.4)" stroke="rgba(38,128,235,0.5)" stroke-width="1" shape-rendering="geometricPrecision"/>
<rect x="230.22" y="775.74" width="35.00" height="17.96" fill="rgba(38,128,235,0.6)" stroke="rgba(38,128,235,0.7)" stroke-width="1" shape-rendering="geometricPrecision"/>
<rect x="279.94" y="587.91" width="35.00" height="205.79" fill="rgba(38,128,235,0.4)" stroke="rgba(38,128,235,0.5)" stroke-width="1" shape-rendering="geometricPrecision"/>
<rect x="279.94" y="783.77" width="35.00" height="9.93" fill="rgba(38,128,235,0.6)" stroke="rgba(38,128,235,0.7)" stroke-width="1" shape-rendering="geometricPrecision"/>
<rect x="329.66" y="742.83" width="35.00" height="50.87" fill="rgba(38,128,235,0.4)" stroke="rgba(38,128,235,0.5)" stroke-width="1" shape-rendering="geometricPrecision"/>
<rect x="329.66" y="789.38" width="35.00" height="4.32" fill="rgba(38,128,235,0.6)" stroke="rgba(38,128,235,0.7)" stroke-width="1" shape-rendering="geometricPrecision"/>
<rect x="379.38" y="789.38" width="35.00" height="4.32" fill="rgba(38,128,235,0.4)" stroke="rgba(38,128,235,0.5)" stroke-width="1" shape-rendering="geometricPrecision"/>
<rect x="379.38" y="792.59" width="35.00" height="1.11" fill="rgba(38,128,235,0.6)" stroke="rgba(38,128,235,0.7)" stroke-width="1" shape-rendering="geometricPrecision"/>
<rect x="478.82" y="786.17" width="35.00" height="7.53" fill="rgba(38,128,235,0.4)" stroke="rgba(38,128,235,0.5)" stroke-width="1" shape-rendering="geometricPrecision"/>
<rect x="478.82" y="792.59" width="35.00" height="1.11" fill="rgba(38,128,235,0.6)" stroke="rgba(38,128,235,0.7)" stroke-width="1" shape-rendering="geometricPrecision"/>
<rect x="528.54" y="749.25" width="35.00" height="44.45" fill="rgba(38,128,235,0.4)" stroke="rgba(38,128,235,0.5)" stroke-width="1" shape-rendering="geometricPrecision"/>
<rect x="627.98" y="788.58" width="35.00" height="5.12" fill="rgba(38,128,235,0.4)" stroke="rgba(38,128,235,0.5)" stroke-width="1" shape-rendering="geometricPrecision"/>
<rect x="627.98" y="791.79" width="35.00" height="1.91" fill="rgba(38,128,235,0.6)" stroke="rgba(38,128,235,0.7)" stroke-width="1" shape-rendering="geometricPrecision"/>
<rect x="677.70" y="777.34" width="35.00" height="16.36" fill="rgba(38,128,235,0.4)" stroke="rgba(38,128,235,0.5)" stroke-width="1" shape-rendering="geometricPrecision"/>
<rect x="677.70" y="790.99" width="35.00" height="2.71" fill="rgba(38,128,235,0.6)" stroke="rgba(38,128,235,0.7)" stroke-width="1" shape-rendering="geometricPrecision"/>
<rect x="727.42" y="760.49" width="35.00" height="33.21" fill="rgba(38,128,235,0.4)" stroke="rgba(38,128,235,0.5)" stroke-width="1" shape-rendering="geometricPrecision"/>
<rect x="727.42" y="787.78" width="35.00" height="5.92" fill="rgba(38,128,235,0.6)" stroke="rgba(38,128,235,0.7)" stroke-width="1" shape-rendering="geometricPrecision"/>
<rect x="777.14" y="699.49" width="35.00" height="94.21" fill="rgba(38,128,235,0.4)" stroke="rgba(38,128,235,0.5)" stroke-width="1" shape-rendering="geometricPrecision"/>
<rect x="777.14" y="786.98" width="35.00" height="6.72" fill="rgba(38,128,235,0.6)" stroke="rgba(38,128,235,0.7)" stroke-width="1" shape-rendering="geometricPrecision"/>
<rect x="826.86" y="721.96" width="35.00" height="71.74" fill="rgba(38,128,235,0.4)" stroke="rgba(38,128,235,0.5)" stroke-width="1" shape-rendering="geometricPrecision"/>
<rect x="826.86" y="782.16" width="35.00" height="11.54" fill="rgba(38,128,235,0.6)" stroke="rgba(38,128,235,0.7)" stroke-width="1" shape-rendering="geometricPrecision"/>
<rect x="876.58" y="502.03" width="35.00" height="291.67" fill="rgba(38,128,235,0.4)" stroke="rgba(38,128,235,0.5)" stroke-width="1" shape-rendering="geometricPrecision"/>
<rect x="876.58" y="772.53" width="35.00" height="21.17" fill="rgba(38,128,235,0.6)" stroke="rgba(38,128,235,0.7)" stroke-width="1" shape-rendering="geometricPrecision"/>
<rect x="926.30" y="505.24" width="35.00" height="288.46" fill="rgba(38,128,235,0.4)" stroke="rgba(38,128,235,0.5)" stroke-width="1" shape-rendering="geometricPrecision"/>
<rect x="926.30" y="773.33" width="35.00" height="20.37" fill="rgba(38,128,235,0.6)" stroke="rgba(38,128,235,0.7)" stroke-width="1" shape-rendering="geometricPrecision"/>
<rect x="976.02" y="485.17" width="35.00" height="308.53" fill="rgba(38,128,235,0.4)" stroke="rgba(38,128,235,0.5)" stroke-width="1" shape-rendering="geometricPrecision"/>
<rect x="976.02" y="775.74" width="35.00" height="17.96" fill="rgba(38,128,235,0.6)" stroke="rgba(38,128,235,0.7)" stroke-width="1" shape-rendering="geometricPrecision"/>
<rect x="1025.74" y="697.08" width="35.00" height="96.62" fill="rgba(38,128,235,0.4)" stroke="rgba(38,128,235,0.5)" stroke-width="1" shape-rendering="geometricPrecision"/>
<rect x="1025.74" y="778.95" width="35.00" height="14.75" fill="rgba(38,128,235,0.6)" stroke="rgba(38,128,235,0.7)" stroke-width="1" shape-rendering="geometricPrecision"/>
<rect x="1075.46" y="533.33" width="35.00" height="260.37" fill="rgba(38,128,235,0.4)" stroke="rgba(38,128,235,0.5)" stroke-width="1" shape-rendering="geometricPrecision"/>
<rect x="1075.46" y="779.75" width="35.00" height="13.95" fill="rgba(38,128,235,0.6)" stroke="rgba(38,128,235,0.7)" stroke-width="1" shape-rendering="geometricPrecision"/>
<rect x="1125.18" y="444.24" width="35.00" height="349.46" fill="rgba(38,128,235,0.4)" stroke="rgba(38,128,235,0.5)" stroke-width="1" shape-rendering="geometricPrecision"/>
<rect x="1125.18" y="770.92" width="35.00" height="22.78" fill="rgba(38,128,235,0.6)" stroke="rgba(38,128,235,0.7)" stroke-width="1" shape-rendering="geometricPrecision"/>
<rect x="1174.90" y="720.35" width="35.00" height="73.35" fill="rgba(38,128,235,0.4)" stroke="rgba(38,128,235,0.5)" stroke-width="1" shape-rendering="geometricPrecision"/>
<rect x="1174.90" y="781.36" width="35.00" height="12.34" fill="rgba(38,128,235,0.6)" stroke="rgba(38,128,235,0.7)" stroke-width="1" shape-rendering="geometricPrecision"/>
<rect x="1224.62" y="725.17" width="35.00" height="68.53" fill="rgba(38,128,235,0.4)" stroke="rgba(38,128,235,0.5)" stroke-width="1" shape-rendering="geometricPrecision"/>
<rect x="1224.62" y="786.17" width="35.00" height="7.53" fill="rgba(38,128,235,0.6)" stroke="rgba(38,128,235,0.7)" stroke-width="1" shape-rendering="geometricPrecision"/>
<rect x="1274.34" y="538.15" width="35.00" height="255.55" fill="rgba(38,128,235,0.4)" stroke="rgba(38,128,235,0.5)" stroke-width="1" shape-rendering="geometricPrecision"/>
<rect x="1274.34" y="777.34" width="35.00" height="16.36" fill="rgba(38,128,235,0.6)" stroke="rgba(38,128,235,0.7)" stroke-width="1" shape-rendering="geometricPrecision"/>
<rect x="1324.06" y="523.70" width="35.00" height="270.00" fill="rgba(38,128,235,0.4)" stroke="rgba(38,128,235,0.5)" stroke-width="1" shape-rendering="geometricPrecision"/>
<rect x="1324.06" y="774.94" width="35.00" height="18.76" fill="rgba(38,128,235,0.6)" stroke="rgba(38,128,235,0.7)" stroke-width="1" shape-rendering="geometricPrecision"/>
</svg>
<div class="t " style="top:787.52px;font-size:12.5px;color:#c6c6c6;font-weight:400;letter-spacing:0.15px;right:1390.10px;">0</div>
<div class="t " style="top:747.39px;font-size:12.5px;color:#c6c6c6;font-weight:400;letter-spacing:0.15px;right:1390.10px;">50</div>
<div class="t " style="top:707.25px;font-size:12.5px;color:#c6c6c6;font-weight:400;letter-spacing:0.15px;right:1390.10px;">100</div>
<div class="t " style="top:667.12px;font-size:12.5px;color:#c6c6c6;font-weight:400;letter-spacing:0.15px;right:1390.10px;">150</div>
<div class="t " style="top:626.99px;font-size:12.5px;color:#c6c6c6;font-weight:400;letter-spacing:0.15px;right:1390.10px;">200</div>
<div class="t " style="top:586.85px;font-size:12.5px;color:#c6c6c6;font-weight:400;letter-spacing:0.15px;right:1390.10px;">250</div>
<div class="t " style="top:546.72px;font-size:12.5px;color:#c6c6c6;font-weight:400;letter-spacing:0.15px;right:1390.10px;">300</div>
<div class="t " style="top:506.59px;font-size:12.5px;color:#c6c6c6;font-weight:400;letter-spacing:0.15px;right:1390.10px;">350</div>
<div class="t " style="top:466.45px;font-size:12.5px;color:#c6c6c6;font-weight:400;letter-spacing:0.15px;right:1390.10px;">400</div>
<div class="t " style="top:426.32px;font-size:12.5px;color:#c6c6c6;font-weight:400;letter-spacing:0.15px;right:1390.10px;">450</div>
<div class="t " style="top:805.67px;font-size:12.2px;color:#c6c6c6;font-weight:400;left:97.66px;width:200px;text-align:center;">9PM</div>
<div class="t " style="top:805.67px;font-size:12.2px;color:#c6c6c6;font-weight:400;left:147.38px;width:200px;text-align:center;">10PM</div>
<div class="t " style="top:805.67px;font-size:12.2px;color:#c6c6c6;font-weight:400;left:197.10px;width:200px;text-align:center;">11PM</div>
<div class="t " style="top:805.67px;font-size:12.2px;color:#c6c6c6;font-weight:400;left:246.82px;width:200px;text-align:center;">12AM</div>
<div class="t " style="top:805.67px;font-size:12.2px;color:#c6c6c6;font-weight:400;left:296.54px;width:200px;text-align:center;">1AM</div>
<div class="t " style="top:805.67px;font-size:12.2px;color:#c6c6c6;font-weight:400;left:346.26px;width:200px;text-align:center;">2AM</div>
<div class="t " style="top:805.67px;font-size:12.2px;color:#c6c6c6;font-weight:400;left:395.98px;width:200px;text-align:center;">3AM</div>
<div class="t " style="top:805.67px;font-size:12.2px;color:#c6c6c6;font-weight:400;left:445.70px;width:200px;text-align:center;">4AM</div>
<div class="t " style="top:805.67px;font-size:12.2px;color:#c6c6c6;font-weight:400;left:495.42px;width:200px;text-align:center;">5AM</div>
<div class="t " style="top:805.67px;font-size:12.2px;color:#c6c6c6;font-weight:400;left:545.14px;width:200px;text-align:center;">6AM</div>
<div class="t " style="top:805.67px;font-size:12.2px;color:#c6c6c6;font-weight:400;left:594.86px;width:200px;text-align:center;">7AM</div>
<div class="t " style="top:805.67px;font-size:12.2px;color:#c6c6c6;font-weight:400;left:644.58px;width:200px;text-align:center;">8AM</div>
<div class="t " style="top:805.67px;font-size:12.2px;color:#c6c6c6;font-weight:400;left:694.30px;width:200px;text-align:center;">9AM</div>
<div class="t " style="top:805.67px;font-size:12.2px;color:#c6c6c6;font-weight:400;left:744.02px;width:200px;text-align:center;">10AM</div>
<div class="t " style="top:805.67px;font-size:12.2px;color:#c6c6c6;font-weight:400;left:793.74px;width:200px;text-align:center;">11AM</div>
<div class="t " style="top:805.67px;font-size:12.2px;color:#c6c6c6;font-weight:400;left:843.46px;width:200px;text-align:center;">12PM</div>
<div class="t " style="top:805.67px;font-size:12.2px;color:#c6c6c6;font-weight:400;left:893.18px;width:200px;text-align:center;">1PM</div>
<div class="t " style="top:805.67px;font-size:12.2px;color:#c6c6c6;font-weight:400;left:942.90px;width:200px;text-align:center;">2PM</div>
<div class="t " style="top:805.67px;font-size:12.2px;color:#c6c6c6;font-weight:400;left:992.62px;width:200px;text-align:center;">3PM</div>
<div class="t " style="top:805.67px;font-size:12.2px;color:#c6c6c6;font-weight:400;left:1042.34px;width:200px;text-align:center;">4PM</div>
<div class="t " style="top:805.67px;font-size:12.2px;color:#c6c6c6;font-weight:400;left:1092.06px;width:200px;text-align:center;">5PM</div>
<div class="t " style="top:805.67px;font-size:12.2px;color:#c6c6c6;font-weight:400;left:1141.78px;width:200px;text-align:center;">6PM</div>
<div class="t " style="top:805.67px;font-size:12.2px;color:#c6c6c6;font-weight:400;left:1191.50px;width:200px;text-align:center;">7PM</div>
<div class="t " style="top:805.67px;font-size:12.2px;color:#c6c6c6;font-weight:400;left:1241.22px;width:200px;text-align:center;">8PM</div>
<div class="abs" style="left:705px;top:848px;width:10px;height:10px;border-radius:50%;background:#4b97ea;"></div>
<div class="t " style="top:846.83px;font-size:12.6px;color:#c6c6c6;font-weight:400;letter-spacing:0.2px;left:727.20px;">Visitors</div>
<div class="abs" style="left:790px;top:848px;width:10px;height:10px;border-radius:50%;background:#6cabf0;"></div>
<div class="t " style="top:846.83px;font-size:12.6px;color:#c6c6c6;font-weight:400;letter-spacing:0.25px;left:812.40px;">Views</div>
<div class="abs" style="left:136px;top:883px;width:1280px;height:1px;background:#2e2e2e;"></div>
<div class="abs" style="left:776px;top:883px;width:1px;height:30px;background:#2e2e2e;"></div>
</div>
<div id="winborder"></div>
</body></html>
